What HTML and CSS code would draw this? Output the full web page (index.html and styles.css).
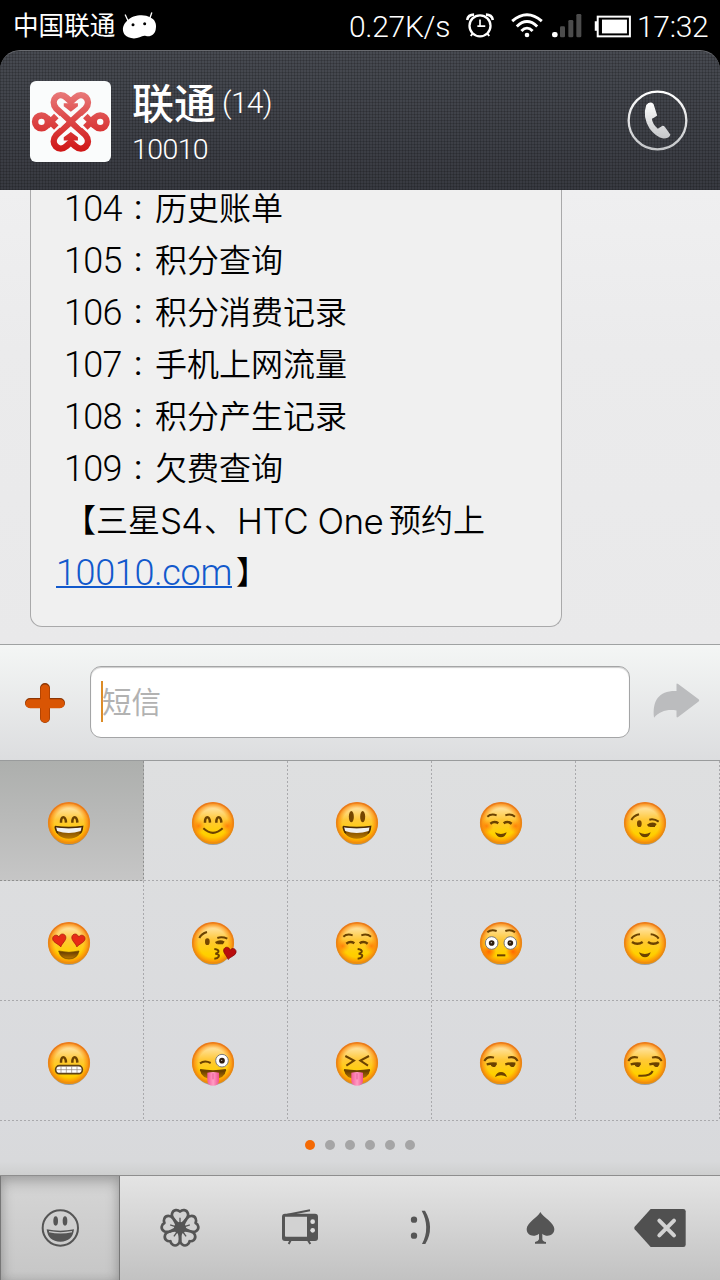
FILE: index.html
```html
<!DOCTYPE html>
<html lang="zh-CN">
<head>
<meta charset="utf-8">
<title>联通 10010</title>
<link rel="stylesheet" href="styles.css">
</head>
<body>
<svg class="defs" width="0" height="0" aria-hidden="true">
  <defs>
    <linearGradient id="skin" x1="0" y1="0" x2="0" y2="1">
      <stop offset="0" stop-color="#ffd27a"/><stop offset=".12" stop-color="#ffe3a0"/><stop offset=".42" stop-color="#ffc838"/><stop offset=".75" stop-color="#ffd000"/><stop offset="1" stop-color="#ffc400"/>
    </linearGradient>
    <radialGradient id="edge"><stop offset=".7" stop-color="#ff9000" stop-opacity="0"/><stop offset="1" stop-color="#f58210" stop-opacity="1"/></radialGradient>
    <linearGradient id="rim" x1="0" y1="0" x2="0" y2="1"><stop offset="0" stop-color="#ea7a1c"/><stop offset="1" stop-color="#e9900f"/></linearGradient>
    <radialGradient id="blush"><stop offset="0" stop-color="#ff5a00" stop-opacity=".65"/><stop offset="1" stop-color="#ff7a00" stop-opacity="0"/></radialGradient>
    <linearGradient id="mouthfill" x1="0" y1="0" x2="0" y2="1"><stop offset="0" stop-color="#5e3600"/><stop offset="1" stop-color="#b97800"/></linearGradient>
    <linearGradient id="pink" x1="0" y1="0" x2="1" y2="0"><stop offset="0" stop-color="#f45b98"/><stop offset=".5" stop-color="#ff9cc4"/><stop offset="1" stop-color="#f0508f"/></linearGradient>
    <linearGradient id="unicom" gradientUnits="userSpaceOnUse" x1="0" y1="35" x2="0" y2="205"><stop offset="0" stop-color="#e87878"/><stop offset=".5" stop-color="#dc4444"/><stop offset="1" stop-color="#d01818"/></linearGradient>
    <linearGradient id="silver" x1="0" y1="0" x2="0" y2="1"><stop offset="0" stop-color="#fff"/><stop offset="1" stop-color="#c4c6c9"/></linearGradient>
    <g id="face">
      <ellipse cx="63" cy="68" rx="60" ry="61" fill="#555" opacity=".45"/>
      <circle cx="63" cy="63" r="61.5" fill="url(#skin)"/>
      <circle cx="63" cy="63" r="61.5" fill="url(#edge)"/>
      <circle cx="63" cy="63" r="61" fill="none" stroke="url(#rim)" stroke-width="4.5"/>
    </g>
    <g id="cheeks"><circle cx="20" cy="72" r="21" fill="url(#blush)"/><circle cx="106" cy="72" r="21" fill="url(#blush)"/></g>
    <path id="happy" class="eye" d="M39 62Q39 46 46 46Q53 46 54 62M73 62Q73 46 80 46Q87 46 88 62"/>
    <g id="grin"><path d="M21 73Q62 80 104 73Q102 110 62 110Q24 110 21 73Z" fill="url(#mouthfill)"/><path d="M24 76Q62 82 101 76L98 87Q62 99 27 87Z" fill="#f1f1f1"/><path d="M21 73Q62 80 104 73Q102 92 95 94M30 94Q23 88 21 73" class="thin"/></g>
    <path id="smallmouth" class="solid" d="M45 91Q63 101 80 91Q76 106 63 106Q50 106 45 91Z"/>
    <path id="brows" class="line" d="M22 44Q33 34 50 40M76 40Q93 34 105 44"/>
    <path id="lids" class="eye" d="M31 65Q43 56 55 64M71 64Q83 56 95 65"/>
    <path id="pucker" class="line" d="M67 81Q82 83 79 90Q76 94 70 95Q84 97 80 104Q77 109 67 110"/>
    <path id="heart" d="M20 38C15 28 0 22 0 11C0 0 15-4 20 8C25-4 40 0 40 11C40 22 25 28 20 38Z"/>
    <g id="wide"><circle r="19" fill="#fff" stroke="#777" stroke-width="3"/><circle r="8.5" fill="#2d1d10"/><circle cx="-1" cy="-1" r="2" fill="#ccc"/></g>
    <g id="tongue"><path d="M24 84Q63 91 102 84Q99 111 63 111Q28 111 24 84Z" fill="url(#mouthfill)"/><path d="M24 84Q63 91 102 84" class="line"/><path d="M46 92Q63 88 81 92V116Q80 131 63 131Q47 131 46 116Z" fill="url(#pink)"/><path d="M63 94V112" stroke="#e65b98" stroke-width="3"/></g>
    <g id="sly"><path class="line" d="M13 57Q22 41 42 47M84 47Q104 41 113 57"/><path class="eye" d="M20 67Q35 63 50 65M76 67Q91 63 106 65"/><path class="solid" d="M31 65H50Q48 77 39 75Q32 73 31 65ZM87 65H106Q104 77 95 75Q88 73 87 65Z"/></g>
  </defs>
</svg>
<div class="screen">
  <div class="status">
    <span class="carrier">中国联通</span>
    <svg class="droid" viewBox="0 0 105 81"><path d="M10 9 18 26M89 3 83 20" stroke="#fff" stroke-width="4" stroke-linecap="round"/><path d="M17 25C30 9 68 5 84 16C99 22 105 37 101 53C98 67 87 75 72 72C64 70 60 73 53 76C39 82 16 80 7 67C-2 52 4 36 17 25Z" fill="#fff"/><circle cx="33" cy="38" r="4.5"/><circle cx="68" cy="35" r="4.5"/></svg>
    <span class="speed">0.27K/s</span>
    <svg class="alarm" viewBox="0 0 84 76"><g fill="none" stroke="#fff"><circle cx="42" cy="39" r="32" stroke-width="7"/><path d="M42 20V40H58M34 40H42" stroke-width="5"/><path d="M3 21Q6 5 24 5M60 5Q78 5 81 21" stroke-width="8"/><path d="m20 62-6 8M64 62l6 8" stroke-width="6"/></g></svg>
    <svg class="wifi" viewBox="0 0 96 76"><g fill="none" stroke="#fff" stroke-width="9"><path d="M3 25Q48-14 93 25"/><path d="M17 41Q48 11 79 41"/><path d="M31 55Q48 37 65 55"/></g><circle cx="48" cy="67" r="7" fill="#fff"/></svg>
    <svg class="signal" viewBox="0 0 90 72"><rect y="54" width="17" height="16" rx="7" fill="#fff"/><g fill="#4c4c4c"><rect x="24" y="37" width="15" height="33" rx="4"/><rect x="49" y="18" width="15" height="52" rx="4"/><rect x="73" width="15" height="70" rx="4"/></g></svg>
    <svg class="battery" viewBox="0 0 112 70"><path d="M9 19H2V48H9" fill="#fff"/><rect x="11" y="5" width="98" height="60" fill="none" stroke="#fff" stroke-width="6"/><rect x="24" y="14" width="76" height="42" fill="#fff"/></svg>
    <span class="clock">17:32</span>
  </div>

  <div class="header">
    <svg class="avatar" viewBox="0 0 240 240"><g fill="none" stroke="url(#unicom)" stroke-width="19" stroke-linejoin="round">
      <circle cx="34" cy="121" r="19"/><path d="M50 109 62 120 78 104M50 133 62 122 78 138"/>
      <circle cx="208" cy="121" r="19"/><path d="M192 109 180 120 164 104M192 133 180 122 164 138"/>
      <path d="M121 121 78 82C56 56 86 29 108 49L121 61 134 49C156 29 186 56 164 82L121 121"/>
      <path d="M121 121 78 160C56 186 86 213 108 193L121 181 134 193C156 213 186 186 164 160L121 121"/>
      </g><g fill="none" stroke="#fafafa" stroke-width="3"><path d="M88 104 106 121 88 138M154 104 136 121 154 138"/></g>
      <g fill="url(#unicom)"><path d="M100 66H142V75L121 91 100 75ZM100 176H142V167L121 151 100 167Z"/></g></svg>
    <div class="who"><div class="name">联通<span class="count">(14)</span></div><div class="number">10010</div></div>
    <svg class="call" viewBox="0 0 184 184"><circle cx="92" cy="92" r="87" fill="none" stroke="url(#silver)" stroke-width="7"/><path d="M58 45Q70 32 80 42L91 77Q82 84 75 87Q77 104 93 117L107 108Q112 108 115 112L131 135Q128 146 110 146Q88 143 68 116Q46 80 58 45Z" fill="url(#silver)"/></svg>
  </div>

  <div class="thread">
    <div class="bubble">
      <div class="entry"><span class="code">104</span><span class="colon">:</span>历史账单</div>
      <div class="entry"><span class="code">105</span><span class="colon">:</span>积分查询</div>
      <div class="entry"><span class="code">106</span><span class="colon">:</span>积分消费记录</div>
      <div class="entry"><span class="code">107</span><span class="colon">:</span>手机上网流量</div>
      <div class="entry"><span class="code">108</span><span class="colon">:</span>积分产生记录</div>
      <div class="entry"><span class="code">109</span><span class="colon">:</span>欠费查询</div>
      <div class="entry">【三星<span class="latin s4">S4</span>、<span class="latin htc">HTC One</span>预约上</div>
      <div class="entry last"><span class="link">10010.com</span>】</div>
    </div>
  </div>

  <div class="composer">
    <svg class="plus" viewBox="0 0 120 120"><g stroke-linecap="round" stroke-width="30"><path d="M15 60H105M60 15V105" stroke="#8d3502"/><path d="M15 62H105M60 18V105" stroke="#d95504" stroke-width="27"/></g></svg>
    <div class="field"><span class="caret"></span><span class="hint">短信</span></div>
    <svg class="send" viewBox="0 0 140 106"><path d="M70 4Q70-1 75 3L137 49Q141 52 137 56L75 103Q70 106 70 101V83C38 79 19 87 2 105C-4 52 18 22 70 24Z" fill="#bbbcbe"/></svg>
  </div>

  <div class="grid">
    <div class="cell active"><svg class="emoji" viewBox="0 0 126 126"><use href="#face"/><use href="#happy"/><use href="#grin"/></svg></div>
    <div class="cell"><svg class="emoji" viewBox="0 0 126 126"><use href="#face"/><use href="#cheeks"/><use href="#happy"/><path class="line" d="M34 79Q63 106 92 79"/></svg></div>
    <div class="cell"><svg class="emoji" viewBox="0 0 126 126"><use href="#face"/><g fill="#754600"><ellipse cx="46" cy="44" rx="7.5" ry="17"/><ellipse cx="80" cy="44" rx="7.5" ry="17"/></g><use href="#grin"/></svg></div>
    <div class="cell"><svg class="emoji" viewBox="0 0 126 126"><use href="#face"/><use href="#cheeks"/><use href="#brows"/><use href="#lids"/><use href="#smallmouth"/></svg></div>
    <div class="cell"><svg class="emoji" viewBox="0 0 126 126"><use href="#face"/><path class="line" d="M22 54Q28 42 45 37M76 53Q90 49 104 59"/><ellipse cx="46" cy="65" rx="7" ry="10" fill="#754600"/><path class="eye" d="M71 71Q84 61 96 69M76 71H93"/><use href="#smallmouth"/></svg></div>

    <div class="cell"><svg class="emoji" viewBox="0 0 126 126"><use href="#face"/><g fill="#e72b16" stroke="#a51b08" stroke-width="2"><use href="#heart" transform="translate(15 37) rotate(-10 20 18)"/><use href="#heart" transform="translate(70 37) rotate(10 20 18)"/></g><path d="M32 87Q63 95 93 87Q88 111 63 111Q38 111 32 87Z" fill="url(#mouthfill)" stroke="#6b4200" stroke-width="2"/></svg></div>
    <div class="cell"><svg class="emoji" viewBox="0 0 126 126"><use href="#face"/><path class="line" d="M22 48Q28 35 45 30M76 48Q90 43 106 50"/><ellipse cx="46" cy="59" rx="7" ry="10" fill="#754600"/><path class="eye" d="M71 63Q84 55 96 62M76 63H93"/><use href="#pucker"/><use href="#heart" fill="#b90d0d" stroke="#780404" stroke-width="2" transform="translate(93 77) rotate(12 20 18) scale(.95)"/></svg></div>
    <div class="cell"><svg class="emoji" viewBox="0 0 126 126"><use href="#face"/><use href="#cheeks"/><use href="#brows"/><use href="#lids"/><use href="#pucker" x="-2"/></svg></div>
    <div class="cell"><svg class="emoji" viewBox="0 0 126 126"><use href="#face"/><g fill="url(#blush)"><circle cx="27" cy="89" r="23"/><circle cx="99" cy="89" r="23"/><circle cx="27" cy="89" r="20"/><circle cx="99" cy="89" r="20"/></g><use href="#brows" y="-13"/><use href="#wide" x="35" y="63"/><use href="#wide" x="91" y="63"/><path class="line" d="M51 100H76"/></svg></div>
    <div class="cell"><svg class="emoji" viewBox="0 0 126 126"><use href="#face"/><path class="line" d="M22 50Q30 38 48 37M80 37Q96 38 104 50"/><path class="eye" d="M24 60Q40 71 56 60M72 60Q88 71 104 60"/><use href="#smallmouth"/></svg></div>

    <div class="cell"><svg class="emoji" viewBox="0 0 126 126"><use href="#face"/><use href="#happy"/><rect x="23" y="71" width="80" height="24" rx="11" fill="#fff" stroke="#5f4215" stroke-width="5"/><path d="M25 83H101M39 73V93M55 73V93M71 73V93M87 73V93" stroke="#8d8172" stroke-width="2"/></svg></div>
    <div class="cell"><svg class="emoji" viewBox="0 0 126 126"><use href="#face"/><path class="line" d="M24 64Q38 54 56 63"/><use href="#wide" x="90" y="56"/><use href="#tongue"/></svg></div>
    <div class="cell"><svg class="emoji" viewBox="0 0 126 126"><use href="#face"/><path class="line" d="M28 42 54 56 31 71M99 42 73 56 96 71"/><use href="#tongue"/></svg></div>
    <div class="cell"><svg class="emoji" viewBox="0 0 126 126"><use href="#face"/><use href="#sly"/><path class="solid" d="M45 105Q50 90 63 90Q76 90 81 105Q63 94 45 105Z"/></svg></div>
    <div class="cell"><svg class="emoji" viewBox="0 0 126 126"><use href="#face"/><use href="#sly"/><path class="line" d="M43 101Q79 104 86 87"/></svg></div>
  </div>

  <div class="pager"><i class="on"></i><i></i><i></i><i></i><i></i><i></i></div>

  <div class="tabs">
    <div class="tab selected"><svg viewBox="0 0 120 120"><circle cx="61" cy="60" r="53" fill="none" stroke="#555" stroke-width="6"/><g fill="#555"><ellipse cx="47" cy="39" rx="7" ry="14"/><ellipse cx="75" cy="39" rx="7" ry="14"/><path d="M20 64Q61 72 102 64Q98 101 61 101Q24 101 20 64Z"/></g><path d="M27 71Q61 78 96 71" stroke="#c9c9c9" stroke-width="4" fill="none"/></svg></div>
    <div class="tab"><svg viewBox="-60 -60 120 120"><g fill="#d2d2d2" stroke="#555" stroke-width="8" stroke-linejoin="round"><path id="petal" d="M0-8C-12-18-28-30-24-43C-20-57-6-55 0-49C6-55 20-57 24-43C28-30 12-18 0-8Z"/><use href="#petal" transform="rotate(72)"/><use href="#petal" transform="rotate(144)"/><use href="#petal" transform="rotate(216)"/><use href="#petal" transform="rotate(288)"/></g><circle r="18" fill="#555"/><g stroke="#555" stroke-width="4"><path id="stamen" d="M0-12V-31"/><use href="#stamen" transform="rotate(72)"/><use href="#stamen" transform="rotate(144)"/><use href="#stamen" transform="rotate(216)"/><use href="#stamen" transform="rotate(288)"/></g></svg></div>
    <div class="tab"><svg viewBox="0 0 120 120"><path d="M22 20 90 7M32 97 26 108M84 97 91 108" stroke="#555" stroke-width="6"/><rect x="6" y="17" width="108" height="82" rx="9" fill="#555"/><path d="M15 26H81V86H18Q15 86 15 83Z" fill="#d2d2d2"/><circle cx="98" cy="41" r="7" fill="#ddd"/><circle cx="98" cy="67" r="7" fill="#ddd"/></svg></div>
    <div class="tab"><svg viewBox="0 0 120 120"><g fill="#555"><circle cx="42" cy="35" r="9.5"/><circle cx="42" cy="83" r="9.5"/><path d="M65 8H75Q105 58 76 108H66Q92 58 65 8Z"/></g></svg></div>
    <div class="tab"><svg viewBox="0 0 120 120"><path d="M61 12C69 28 103 44 103 63C103 83 80 89 67 77V94Q68 101 78 102V107H45V102Q55 101 57 94V77C42 89 20 83 20 63C20 44 54 28 61 12Z" fill="#555"/></svg></div>
    <div class="tab"><svg class="erase" viewBox="0 0 156 120"><path d="M50 3H148Q155 3 155 10V110Q155 117 148 117H50L2 64Q-1 60 2 56Z" fill="#505050"/><path d="M76 38 120 82M120 38 76 82" stroke="#d2d2d2" stroke-width="12" stroke-linecap="round"/></svg></div>
  </div>
</div>
</body>
</html>
```
FILE: styles.css
```css
* { box-sizing: border-box; }
body { margin: 0; background: #000; }
svg { display: block; flex: none; overflow: visible; }
.defs { position: absolute; }
.screen {
  width: 720px; height: 1280px; overflow: hidden;
  display: flex; flex-direction: column;
  font-family: Roboto, "Noto Sans CJK SC", sans-serif; font-weight: 300;
  white-space: nowrap;
}
.line { fill: none; stroke: #6b4200; stroke-width: 6; }
.eye { fill: none; stroke: #6b4200; stroke-width: 7.5; }
.thin { fill: none; stroke: #4a2b05; stroke-width: 4; }
.solid { fill: #6b4200; }

.status {
  height: 50px; flex: none; background: #000; color: #fff;
  display: flex; align-items: center; padding-left: 13px;
}
.carrier { font-size: 25.6px; line-height: 50px; width: 109px; font-weight: 400; padding-top: 1px; }
.droid { width: 35px; height: 27px; }
.speed { font-size: 30px; width: 115px; margin-left: 192px; padding-top: 2px; letter-spacing: -.3px; }
.alarm { width: 28px; height: 25px; margin-left: 2px; }
.wifi { width: 32px; height: 25px; margin-left: 17px; }
.signal { width: 30px; height: 24px; margin: 2px 0 0 9px; }
.battery { width: 37px; height: 23px; margin: 2px 0 0 12px; }
.clock { font-size: 30px; margin-left: 6px; padding-top: 2px; letter-spacing: -.3px; }

.header {
  height: 140px; flex: none; color: #fff;
  display: flex; align-items: flex-start; padding: 30px 32px 0 30px;
  border-top: 1px solid #696b70; border-radius: 20px 20px 0 0;
  background:
    repeating-linear-gradient(90deg, rgba(0,0,0,.16) 0 1px, transparent 1px 3px),
    repeating-linear-gradient(0deg, rgba(0,0,0,.16) 0 1px, transparent 1px 3px),
    linear-gradient(#474a51, #383a41);
}
.avatar { width: 81px; height: 81px; border-radius: 6px; background: #fafcfc; }
.who { flex: 1; margin-left: 21px; }
.name { height: 49px; line-height: 48px; font-size: 42px; font-weight: 500; display: flex; }
.count { font-size: 30px; font-weight: 300; margin-left: 6px; line-height: 43px; letter-spacing: -.7px; }
.number { font-size: 28.5px; line-height: 41px; margin-top: -1px; letter-spacing: -.6px; font-weight: 300; }
.call { width: 61px; height: 61px; margin-top: 9px; }

.thread {
  height: 454px; flex: none; overflow: hidden; padding: 0 158px 17px 30px;
  display: flex; flex-direction: column; justify-content: flex-end;
  background: linear-gradient(#efeff0, #ebebec 35%, #e9e9ea);
}
.bubble {
  flex: none; border: 1px solid #a9a9aa; border-top: 0; border-radius: 0 0 12px 12px;
  background: #f0f0f0; padding: 0 0 27px 25px; color: #000;
}
.entry { height: 52px; line-height: 52px; font-size: 32px; font-weight: 350; padding-left: 8px; display: flex; }
.entry.last { padding-left: 0; }
.code { width: 65px; font-size: 36px; letter-spacing: -.7px; }
.colon { width: 26px; padding-left: 5px; font-size: 34px; font-weight: 400; line-height: 49px; }
.latin { font-family: Inter, sans-serif; font-size: 35px; font-weight: 300; }
.s4 { width: 44px; letter-spacing: -.8px; }
.htc { width: 153px; padding-left: 1px; letter-spacing: -.5px; }
.link {
  width: 176px; height: 41px; margin-right: 4px; font-size: 36px; color: #1259cc;
  letter-spacing: -.35px; border-bottom: 2px solid #1259cc;
}

.composer {
  height: 117px; flex: none; display: flex; align-items: flex-start;
  padding: 22px 20px 0 25px; border-top: 1px solid #9fa2a2;
  background: linear-gradient(#f4f6f5, #dcdddf);
}
.plus { width: 40px; height: 40px; margin-top: 16px; }
.field {
  width: 540px; height: 72px; margin: -1px 0 0 25px; padding-left: 10px;
  display: flex; align-items: center; background: #fff;
  border: 1px solid #a4a5a6; border-radius: 11px; box-shadow: inset 0 1px 1px #ccc;
}
.caret { width: 2px; height: 41px; background: #dc8c27; margin-top: -2px; }
.hint { color: #b2b2b2; font-size: 29.5px; font-weight: 400; line-height: 40px; margin-top: 2px; margin-left: -1px; }
.send { width: 47px; height: 35px; margin: 16px 0 0 23px; }

.grid {
  height: 361px; flex: none; margin-top: -1px;
  display: grid; grid-template-columns: repeat(5, 144px); grid-template-rows: repeat(3, 120px);
  border-top: 1px solid #999b9c;
  background: linear-gradient(#dedfe0, #d9dadd);
}
.cell {
  display: flex; align-items: flex-start; padding: 41px 0 0 48px;
  background:
    repeating-linear-gradient(90deg, #a9a9ac 0 2px, transparent 2px 4px) 0 100% / 100% 1px no-repeat,
    repeating-linear-gradient(#a9a9ac 0 2px, transparent 2px 4px) 100% 0 / 1px 100% no-repeat;
}
.active {
  background:
    repeating-linear-gradient(90deg, #8f9090 0 2px, transparent 2px 4px) 0 100% / 100% 1px no-repeat,
    repeating-linear-gradient(#8f9090 0 2px, transparent 2px 4px) 100% 0 / 1px 100% no-repeat,
    linear-gradient(#adafad, #b8b9b8 45%, #c6c6c6);
}
.emoji { width: 42px; height: 42px; }

.pager {
  height: 54px; flex: none; display: flex; justify-content: center; gap: 10px; padding-top: 19px;
  background: linear-gradient(#d9dadd, #d8d9db 75%, #cecfcf);
}
.pager i { width: 10px; height: 10px; border-radius: 50%; background: #a5a5a6; }
.pager .on { background: #f46a05; }

.tabs {
  height: 105px; flex: none; display: grid; grid-template-columns: repeat(6, 120px);
  border-top: 1px solid #8e8e8e; background: linear-gradient(#e4e4e4, #c2c2c2);
}
.tab { display: flex; justify-content: center; padding-top: 32px; }
.tab svg { width: 40px; height: 40px; }
.tab .erase { width: 52px; }
.selected {
  border: 1px solid #777; border-width: 0 1px;
  background: linear-gradient(#d6d6d6, #c6c6c6);
  box-shadow: inset 0 6px 14px rgba(0,0,0,.22), inset 0 0 10px rgba(0,0,0,.1);
}
```
